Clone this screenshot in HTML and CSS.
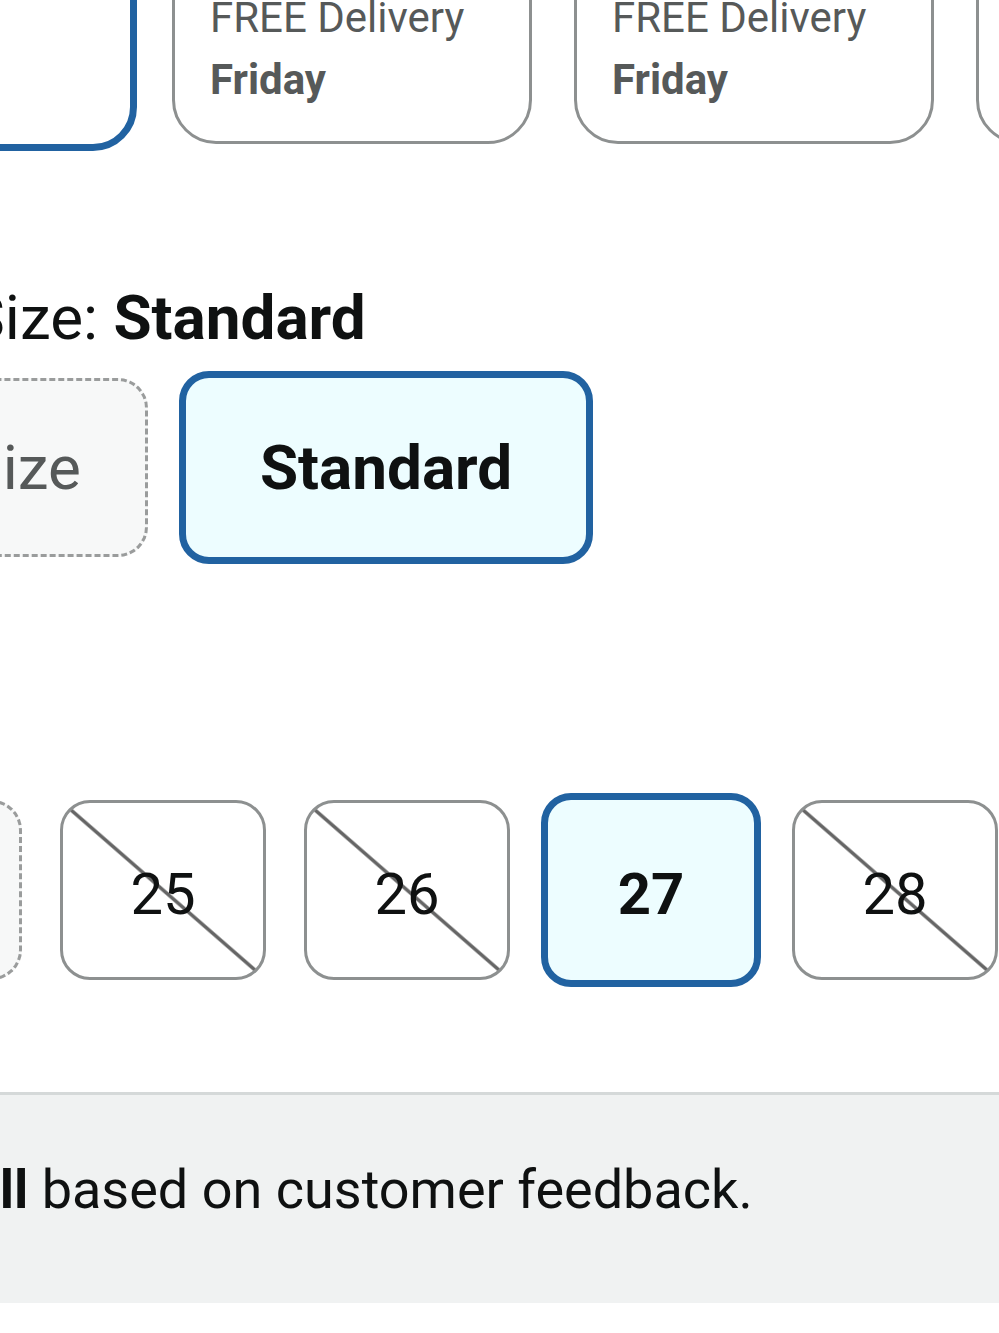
FILE: index.html
```html
<!DOCTYPE html>
<html lang="en">
<head>
  <meta charset="UTF-8" />
  <meta name="viewport" content="width=device-width, initial-scale=1.0"/>
  <title>Product options</title>
  <link rel="stylesheet" href="styles.css">
</head>
<body>
  <div class="page">
    <!-- Delivery options -->
    <div class="delivery-row">
      <div class="delivery-card selected">
        <span class="delivery-label">Fastest</span>
        <span class="delivery-day">Thursday</span>
      </div>
      <div class="delivery-card">
        <span class="delivery-label">FREE Delivery</span>
        <span class="delivery-day">Friday</span>
      </div>
      <div class="delivery-card">
        <span class="delivery-label">FREE Delivery</span>
        <span class="delivery-day">Friday</span>
      </div>
      <div class="delivery-card">
        <span class="delivery-label">FREE Delivery</span>
        <span class="delivery-day">Friday</span>
      </div>
    </div>

    <!-- Size -->
    <div class="size-label">Size: <b>Standard</b></div>
    <div class="size-options">
      <div class="size-option unavailable">Plus size</div>
      <div class="size-option selected">Standard</div>
    </div>

    <!-- Waist -->
    <div class="number-row">
      <div class="number-option unavailable">24</div>
      <div class="number-option crossed">25</div>
      <div class="number-option crossed">26</div>
      <div class="number-option selected">27</div>
      <div class="number-option crossed">28</div>
    </div>

    <!-- Fit note -->
    <div class="fit-note">
      <p><b>Runs small</b> based on customer feedback.</p>
    </div>
  </div>
</body>
</html>
```

FILE: styles.css
```css
body {
  font-family: Roboto, "Noto Sans", sans-serif;
  margin: 0;
  padding: 0;
  background-color: #fff;
  color: #0f1111;
  overflow: hidden;
}

.page {
  width: 999px;
  height: 1333px;
  overflow: hidden;
}

.delivery-row {
  display: flex;
  align-items: flex-start;
  gap: 42px;
  margin-top: -70px;
  margin-left: -230px;
}

.delivery-card {
  flex: 0 0 auto;
  box-sizing: border-box;
  width: 360px;
  height: 214px;
  display: flex;
  flex-direction: column;
  justify-content: flex-end;
  padding: 0 20px 30px 35px;
  border: 3px solid #8d9090;
  border-radius: 44px;
  background-color: #fff;
  color: #565959;
  font-size: 42px;
  line-height: 62px;
}

.delivery-card.selected {
  width: 374px;
  height: 228px;
  margin: -7px;
  border: 7px solid #2162a1;
  padding-left: 39px;
  padding-bottom: 34px;
}

.delivery-day {
  font-weight: bold;
}

.size-label {
  margin: 136px 0 0 -32px;
  font-size: 62px;
  line-height: 76px;
}

.size-options {
  display: flex;
  align-items: flex-start;
  gap: 38px;
  margin: 22px 0 0 -232px;
}

.size-option {
  flex: 0 0 auto;
  box-sizing: border-box;
  height: 179px;
  display: flex;
  align-items: center;
  justify-content: center;
  border-radius: 30px;
  font-size: 62px;
}

.size-option.unavailable {
  width: 380px;
  border: 3px dashed #9a9c9c;
  background-color: #f7f8f8;
  color: #565959;
}

.size-option.selected {
  width: 414px;
  height: 193px;
  margin: -7px;
  border: 7px solid #2162a1;
  background-color: #edfdff;
  font-weight: bold;
}

.number-row {
  display: flex;
  align-items: flex-start;
  gap: 38px;
  margin: 243px 0 0 -184px;
}

.number-option {
  flex: 0 0 auto;
  box-sizing: border-box;
  width: 206px;
  height: 180px;
  display: flex;
  align-items: center;
  justify-content: center;
  padding-top: 8px;
  border: 3px solid #8d9090;
  border-radius: 30px;
  font-size: 58px;
}

.number-option.unavailable {
  border: 3px dashed #9a9c9c;
  background-color: #f7f8f8;
  color: #565959;
}

.number-option.crossed {
  background: linear-gradient(to top right, transparent calc(50% - 2.5px), #666 calc(50% - 1px), #666 calc(50% + 1px), transparent calc(50% + 2.5px));
}

.number-option.selected {
  width: 220px;
  height: 194px;
  margin: -7px;
  border: 7px solid #2162a1;
  background-color: #edfdff;
  font-weight: bold;
}

.fit-note {
  margin-top: 112px;
  height: 211px;
  box-sizing: border-box;
  border-top: 3px solid #d5d9d9;
  background-color: #f0f2f2;
  padding-top: 63px;
}

.fit-note p {
  margin: 0 0 0 -240px;
  font-size: 54px;
  line-height: 64px;
  white-space: nowrap;
}
```
